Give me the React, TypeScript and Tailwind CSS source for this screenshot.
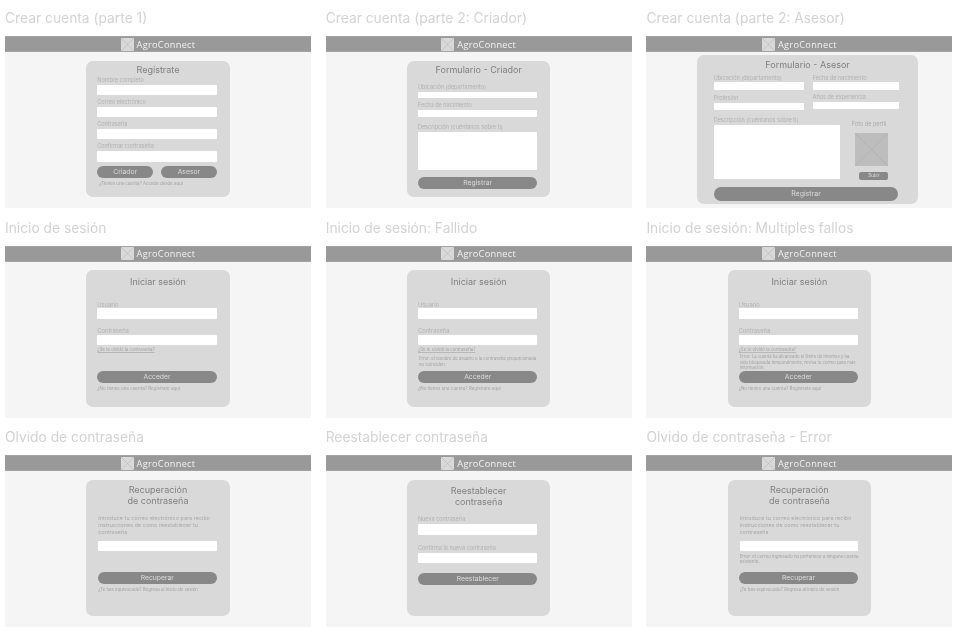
import React from "react";

function Logo() {
  return (
    <svg viewBox="0 0 13 13" className="w-[13px] h-[13px] shrink-0 bg-[#d9d9d9]">
      <path d="M0 0L13 13M13 0L0 13" stroke="#a6a6a6" strokeWidth="0.4" fill="none" />
    </svg>
  );
}

function Screen({ title, className, children }: { title: string; className: string; children: React.ReactNode }) {
  return (
    <div className="w-[306px]">
      <h2 className="h-5 mb-2 text-[13.8px] leading-5 text-[#d3d3d3]">{title}</h2>
      <div className="h-[172px] flex flex-col bg-[#f5f5f5]">
        <div className="h-4 shrink-0 flex items-center justify-center gap-[3px] bg-[#999999] border-t border-b border-t-[#a3a3a3] border-b-[#a3a3a3]">
          <Logo />
          <span className="pt-[1px] text-[9.2px] tracking-[0.3px] text-[#f2f2f2] font-['Open_Sans',sans-serif]">AgroConnect</span>
        </div>
        <div className={className}>{children}</div>
      </div>
    </div>
  );
}

function Card({ children }: { children: React.ReactNode }) {
  return <div className="w-[143.5px] h-[136.5px] mx-auto rounded-[7px] bg-[#d9d9d9] pl-[11px] pr-[13px]">{children}</div>;
}

function CardTitle({ children, className = "" }: { children: React.ReactNode; className?: string }) {
  return <h3 className={`text-center text-[9px] text-[#808080] ${className}`}>{children}</h3>;
}

function Field({
  label,
  className = "",
  boxClassName = "h-[10.5px]",
  labelClassName = "text-[5.5px]",
}: {
  label: string;
  className?: string;
  boxClassName?: string;
  labelClassName?: string;
}) {
  return (
    <div className={className}>
      <div className={`leading-[7px] text-[#b1b1b1] ${labelClassName}`}>{label}</div>
      <div className={`mt-[0.6px] rounded-[1px] bg-white ${boxClassName}`} />
    </div>
  );
}

function Pill({ children, className = "" }: { children: React.ReactNode; className?: string }) {
  return (
    <div className={`h-3 flex items-center justify-center rounded-full bg-[#888888] text-[6.8px] text-[#dcdcdc] ${className}`}>
      {children}
    </div>
  );
}

function Small({ children, className = "" }: { children: React.ReactNode; className?: string }) {
  return <p className={`text-[#a2a2a2] ${className}`}>{children}</p>;
}

function Login({ error, errorClassName = "" }: { error?: React.ReactNode; errorClassName?: string }) {
  return (
    <Card>
      <CardTitle className="-mr-[2px] pt-[6px] leading-3">Iniciar sesión</CardTitle>
      <Field label="Usuario" className="mt-[12.8px]" labelClassName="text-[5.8px]" />
      <Field label="Contraseña" className="mt-[8.2px]" labelClassName="text-[5.8px]" />
      <div className="mt-[2px] text-[4.35px] leading-[6px] underline decoration-[#b8b8b8] text-[#a2a2a2]">¿Se te olvidó la contraseña?</div>
      <div className="h-[17.9px]">
        {error && <Small className={`ml-[1px] w-[123px] text-[4.25px] ${errorClassName}`}>{error}</Small>}
      </div>
      <Pill>Acceder</Pill>
      <Small className="mt-[3.4px] text-[4.5px] leading-[6px]">¿No tienes una cuenta? Regístrate aquí</Small>
    </Card>
  );
}

function Recovery({ error }: { error?: string }) {
  return (
    <Card>
      <CardTitle className="-mr-[2px] pt-[4.5px] leading-[11px]">
        Recuperación
        <br />
        de contraseña
      </CardTitle>
      <p className="mt-[9px] ml-[1px] text-[5.3px] leading-[6.6px] tracking-[0.1px] text-[#a8a8a8]">
        Introduce tu correo electrónico para recibir instrucciones de como reestablecer tu contraseña
      </p>
      <div className="mt-[5.5px] ml-[1px] h-[10.5px] rounded-[1px] bg-white" />
      <div className="h-[20.5px] pt-[2.3px]">
        {error && <Small className="ml-[1px] w-[122px] text-[4.4px] leading-[5.4px]">{error}</Small>}
      </div>
      <Pill className="ml-[0.5px]">Recuperar</Pill>
      <Small className="mt-[3.3px] ml-[1px] text-[4.4px] leading-[6px]">¿Te has equivocado? Regresa al inicio de sesión</Small>
    </Card>
  );
}

export default function App() {
  const topLogin = "flex-1 pt-[8.4px]";
  const topForgot = "flex-1 pt-[8.7px]";
  return (
    <div className="w-[962px] h-[632px] bg-white pt-2 pl-[5px] font-['Inter',sans-serif] blur-[0.3px]">
      <div className="grid grid-cols-[306px_306px_306px] gap-x-[14.7px] gap-y-[9.65px]">
        <Screen title="Crear cuenta (parte 1)" className="flex-1 pt-[8.7px]">
          <Card>
            <CardTitle className="-mr-[2px] pt-[3px] leading-3">Regístrate</CardTitle>
            <Field label="Nombre completo" className="mt-[1.5px]" />
            <Field label="Correo electrónico" className="mt-[4px]" />
            <Field label="Contraseña" className="mt-[4px]" />
            <Field label="Confirmar contraseña" className="mt-[4px]" />
            <div className="mt-[4.7px] flex gap-2">
              <Pill className="flex-1">Criador</Pill>
              <Pill className="flex-1">Asesor</Pill>
            </div>
            <Small className="mt-[2.3px] ml-[2px] text-[4.4px] leading-[6px]">¿Tienes una cuenta? Accede desde aquí</Small>
          </Card>
        </Screen>

        <Screen title="Crear cuenta (parte 2: Criador)" className="flex-1 pt-[8.7px]">
          <Card>
            <CardTitle className="-mr-[2px] pt-[3px] leading-3">Formulario - Criador</CardTitle>
            <Field label="Ubicación (departamento)" className="mt-[8.5px]" boxClassName="h-[6.7px]" />
            <Field label="Fecha de nacimiento" className="mt-[4px]" boxClassName="h-[6.7px]" />
            <Field label="Descripción (cuéntanos sobre ti)" className="mt-[7.3px]" boxClassName="h-[38.3px]" />
            <Pill className="mt-[7.5px]">Registrar</Pill>
          </Card>
        </Screen>

        <Screen title="Crear cuenta (parte 2: Asesor)" className="flex-1 pt-[3.4px]">
          <div className="w-[221px] h-[149px] ml-[50.7px] rounded-[7px] bg-[#d9d9d9] pl-[16.6px] pr-[19.7px]">
            <CardTitle className="-mr-[3px] pt-[3.5px] leading-3">Formulario - Asesor</CardTitle>
            <div className="mt-[4px] grid grid-cols-[90px_86px] gap-x-[9px]">
              <Field label="Ubicación (departamento)" boxClassName="h-[7.3px]" />
              <Field label="Fecha de nacimiento" boxClassName="h-[7.3px]" />
              <Field label="Profesión" className="mt-[5.2px]" boxClassName="h-[7.3px]" />
              <Field label="Años de experiencia" className="mt-[4.2px]" boxClassName="h-[7.3px]" />
            </div>
            <div className="mt-[7.4px] flex">
              <Field label="Descripción (cuéntanos sobre ti)" className="w-[126.7px]" boxClassName="h-[54px]" />
              <div className="ml-[11.5px] flex flex-col">
                <div className="mt-[3.5px] text-[5.5px] leading-[7px] text-[#a9a9a9]">Foto de perfil</div>
                <svg viewBox="0 0 33 33" className="mt-[5.5px] ml-[3.5px] w-[33px] h-[33px] bg-[#bdbdbd]">
                  <path d="M0 0L33 33M33 0L0 33" stroke="#a3a3a3" strokeWidth="0.4" fill="none" />
                </svg>
                <div className="mt-[6px] ml-[7.5px] w-[29px] h-[7.7px] flex items-center justify-center rounded-[2px] bg-[#888888] text-[4.5px] text-[#dedede]">
                  Subir
                </div>
              </div>
            </div>
            <Pill className="mt-[7.4px] h-[13.3px] text-[7px]">Registrar</Pill>
          </div>
        </Screen>

        <Screen title="Inicio de sesión" className={topLogin}>
          <Login />
        </Screen>

        <Screen title="Inicio de sesión: Fallido" className={topLogin}>
          <Login
            errorClassName="pt-[2.4px] leading-[6.6px]"
            error="Error: el nombre de usuario o la contraseña proporcionada no coinciden."
          />
        </Screen>

        <Screen title="Inicio de sesión: Multiples fallos" className={topLogin}>
          <Login
            errorClassName="pt-[1px] leading-[5.3px] whitespace-nowrap"
            error={
              <>
                Error: La cuenta ha alcanzado el límite de intentos y ha
                <br />
                sido bloqueada temporalmente, revisa tu correo para más
                <br />
                información.
              </>
            }
          />
        </Screen>

        <Screen title="Olvido de contraseña" className={topForgot}>
          <Recovery />
        </Screen>

        <Screen title="Reestablecer contraseña" className={topForgot}>
          <Card>
            <CardTitle className="-mr-[2px] pt-[5px] leading-[11px]">
              Reestablecer
              <br />
              contraseña
            </CardTitle>
            <Field label="Nueva contraseña" className="mt-[9.5px]" />
            <Field label="Confirma la nueva contraseña" className="mt-[10.7px]" />
            <Pill className="mt-[9.3px]">Reestablecer</Pill>
          </Card>
        </Screen>

        <Screen title="Olvido de contraseña - Error" className={topForgot}>
          <Recovery error="Error: el correo ingresado no pertenece a ninguna cuenta existente." />
        </Screen>
      </div>
    </div>
  );
}
